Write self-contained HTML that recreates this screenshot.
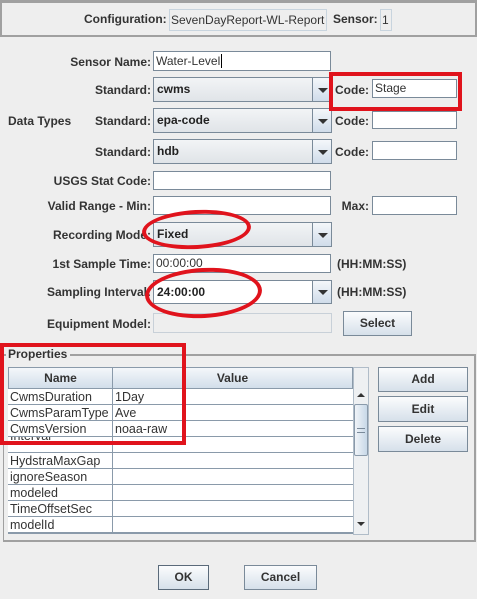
<!DOCTYPE html>
<html><head><meta charset="utf-8"><style>
*{box-sizing:border-box;margin:0;padding:0}
body{width:477px;height:599px;background:#eeeeee;position:relative;overflow:hidden;font-family:"Liberation Sans",Arial,sans-serif;font-size:12px;color:#333}
.a{position:absolute}
.lb{position:absolute;font-weight:bold;color:#333;text-align:right;white-space:nowrap;line-height:14px}
.r{right:326px}
.rc{right:108px}
.tf{position:absolute;background:#fff;border:1px solid #7a8a99;padding-left:2px;line-height:16px;white-space:nowrap;color:#333}
.cb{position:absolute;border:1px solid #7a8a99;background:linear-gradient(#f2f4f6,#e0e4e8);font-weight:bold;padding-left:3px;white-space:nowrap;color:#222}
.cb .ar{position:absolute;right:0;top:0;bottom:0;width:19px;border-left:1px solid #7a8a99;background:linear-gradient(#f4f7fa,#d0dcea)}
.cb .ar:after{content:"";position:absolute;left:5px;top:50%;margin-top:-2px;border-left:5px solid transparent;border-right:5px solid transparent;border-top:5px solid #333}
.bt{position:absolute;border:1px solid #7a8a99;background:linear-gradient(#fbfcfd,#d6e0ea);font-weight:bold;text-align:center;color:#333}
.red{position:absolute;border:4px solid #e0131c}
.ell{position:absolute;border:4px solid #e0131c;border-radius:50%}
.row{position:absolute;left:8px;width:345px;height:16px;border-bottom:1px solid #8a9aaa;background:#fff}
.row span{position:absolute;top:1px;line-height:14px;font-size:12.5px;color:#333}
</style></head><body>
<div class="a" style="left:0;top:0;width:477px;height:37px;border-top:3px solid #a0a0a0;border-bottom:2px solid #a0a0a0;border-left:2px solid #a0a0a0;border-right:2px solid #a0a0a0"></div>
<div class="lb" style="left:84px;top:12px">Configuration:</div>
<div class="a" style="left:169px;top:9px;width:158px;height:22px;border:1px solid #c8d4de;line-height:20px;padding-left:1px;color:#333">SevenDayReport-WL-Report</div>
<div class="lb" style="left:333px;top:12px">Sensor:</div>
<div class="a" style="left:380px;top:9px;width:12px;height:22px;border:1px solid #c8d4de;line-height:20px;padding-left:1px">1</div>

<div class="lb r" style="top:55px">Sensor Name:</div>
<div class="tf" style="left:153px;top:51px;width:178px;height:20px;line-height:18px">Water-Level<span style="border-left:1px solid #000;margin-left:1px"></span></div>

<div class="lb r" style="top:83px">Standard:</div>
<div class="cb" style="left:153px;top:77px;width:179px;height:25px;line-height:23px">cwms<div class="ar"></div></div>
<div class="lb rc" style="top:83px">Code:</div>
<div class="tf" style="left:372px;top:79px;width:85px;height:19px">Stage</div>

<div class="lb" style="left:8px;top:114px">Data Types</div>
<div class="lb r" style="top:114px">Standard:</div>
<div class="cb" style="left:153px;top:108px;width:179px;height:25px;line-height:23px">epa-code<div class="ar"></div></div>
<div class="lb rc" style="top:114px">Code:</div>
<div class="tf" style="left:372px;top:111px;width:85px;height:18px"></div>

<div class="lb r" style="top:145px">Standard:</div>
<div class="cb" style="left:153px;top:139px;width:179px;height:25px;line-height:23px">hdb<div class="ar"></div></div>
<div class="lb rc" style="top:145px">Code:</div>
<div class="tf" style="left:372px;top:141px;width:85px;height:19px"></div>

<div class="lb r" style="top:174px">USGS Stat Code:</div>
<div class="tf" style="left:153px;top:171px;width:178px;height:19px"></div>

<div class="lb r" style="top:199px">Valid Range - Min:</div>
<div class="tf" style="left:153px;top:196px;width:178px;height:19px"></div>
<div class="lb rc" style="top:199px">Max:</div>
<div class="tf" style="left:372px;top:196px;width:85px;height:19px"></div>

<div class="lb r" style="top:228px">Recording Mode:</div>
<div class="cb" style="left:153px;top:222px;width:179px;height:25px;line-height:23px">Fixed<div class="ar"></div></div>

<div class="lb r" style="top:257px">1st Sample Time:</div>
<div class="tf" style="left:153px;top:254px;width:178px;height:19px">00:00:00</div>
<div class="lb" style="left:337px;top:257px">(HH:MM:SS)</div>

<div class="lb r" style="top:285px">Sampling Interval:</div>
<div class="cb" style="left:153px;top:280px;width:179px;height:24px;line-height:22px;background:#fff">24:00:00<div class="ar"></div></div>
<div class="lb" style="left:337px;top:285px">(HH:MM:SS)</div>

<div class="lb r" style="top:317px">Equipment Model:</div>
<div class="a" style="left:153px;top:313px;width:179px;height:20px;border:1px solid #c8d0d8;background:#eeeeee"></div>
<div class="bt" style="left:343px;top:311px;width:69px;height:25px;line-height:23px">Select</div>

<div class="a" style="left:3px;top:354px;width:473px;height:188px;border:2px solid #a0a0a0;border-left-width:1px"></div>
<div class="lb" style="left:6px;top:347px;background:#eeeeee;padding:0 3px 0 2px">Properties</div>

<div class="a" style="left:8px;top:367px;width:345px;height:167px;border:1px solid #8a9aaa;background:#fff"></div>
<div class="a" style="left:8px;top:367px;width:105px;height:22px;border:1px solid #8a9aaa;background:linear-gradient(#f4f7fa,#d2deea);font-weight:bold;text-align:center;line-height:20px">Name</div>
<div class="a" style="left:112px;top:367px;width:241px;height:22px;border:1px solid #8a9aaa;background:linear-gradient(#f4f7fa,#d2deea);font-weight:bold;text-align:center;line-height:20px">Value</div>
<div class="row" style="top:389px"><span style="left:2px">CwmsDuration</span><span style="left:107px">1Day</span></div>
<div class="row" style="top:405px"><span style="left:2px">CwmsParamType</span><span style="left:107px">Ave</span></div>
<div class="row" style="top:421px"><span style="left:2px">CwmsVersion</span><span style="left:107px">noaa-raw</span></div>
<div class="row" style="top:437px;overflow:hidden"><span style="left:2px;top:-8px">Interval</span></div>
<div class="row" style="top:453px"><span style="left:2px">HydstraMaxGap</span></div>
<div class="row" style="top:469px"><span style="left:2px">ignoreSeason</span></div>
<div class="row" style="top:485px"><span style="left:2px">modeled</span></div>
<div class="row" style="top:501px"><span style="left:2px">TimeOffsetSec</span></div>
<div class="row" style="top:517px"><span style="left:2px">modelId</span></div>
<div class="a" style="left:112px;top:389px;width:1px;height:145px;background:#8a9aaa"></div>

<div class="a" style="left:353px;top:367px;width:16px;height:168px;border:1px solid #b0bcc8;background:#eef0f2"></div>
<div class="a" style="left:357px;top:393px;border-left:4px solid transparent;border-right:4px solid transparent;border-bottom:4px solid #333"></div>
<div class="a" style="left:354px;top:404px;width:14px;height:52px;border:1px solid #8a9aaa;border-radius:2px;background:linear-gradient(90deg,#f0f4f8,#c8d8e8)"></div>
<div class="a" style="left:357px;top:428px;width:8px;height:5px;border-top:1px solid #7a8a9a;border-bottom:1px solid #7a8a9a"></div>
<div class="a" style="left:357px;top:522px;border-left:4px solid transparent;border-right:4px solid transparent;border-top:4px solid #333"></div>

<div class="bt" style="left:378px;top:367px;width:90px;height:25px;line-height:23px">Add</div>
<div class="bt" style="left:378px;top:396px;width:90px;height:26px;line-height:24px">Edit</div>
<div class="bt" style="left:378px;top:426px;width:90px;height:26px;line-height:24px">Delete</div>

<div class="bt" style="left:158px;top:565px;width:51px;height:25px;line-height:23px;border-color:#5a6a7a">OK</div>
<div class="bt" style="left:244px;top:565px;width:73px;height:25px;line-height:23px">Cancel</div>

<div class="red" style="left:329px;top:72px;width:133px;height:39px"></div>
<div class="red" style="left:0px;top:343px;width:186px;height:102px"></div>
<div class="ell" style="left:142px;top:210px;width:109px;height:39px;transform:rotate(-3deg)"></div>
<div class="ell" style="left:145px;top:268px;width:117px;height:50px;transform:rotate(-3deg)"></div>
</body></html>
